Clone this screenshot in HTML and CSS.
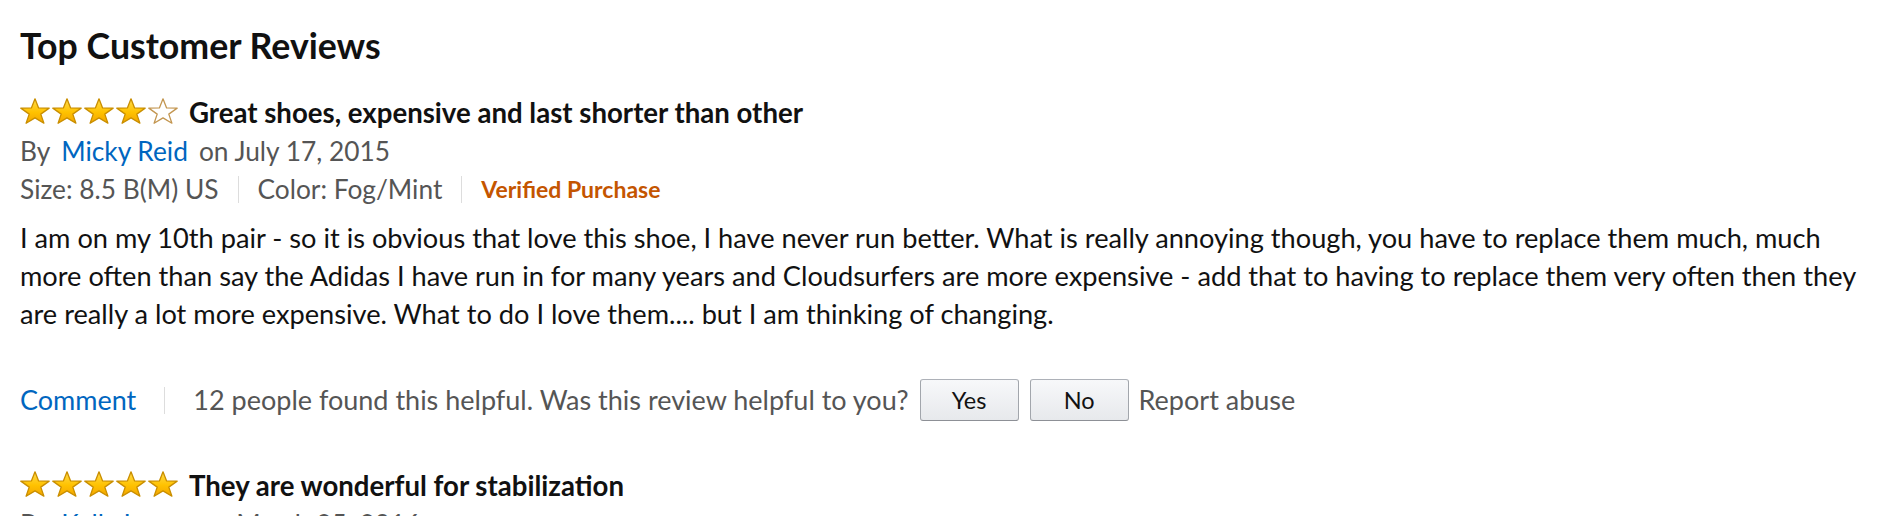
FILE: index.html
```html
<!DOCTYPE html>
<html lang="en">
<head>
<meta charset="utf-8">
<title>Top Customer Reviews</title>
<link rel="stylesheet" href="styles.css">
</head>
<body>
<svg class="defs" width="0" height="0" aria-hidden="true">
  <defs>
    <linearGradient id="gold" x1="0" y1="0" x2="0" y2="1">
      <stop offset="0" stop-color="#ffdb4d"/>
      <stop offset="0.55" stop-color="#ffc200"/>
      <stop offset="1" stop-color="#f3a500"/>
    </linearGradient>
    <symbol id="star" viewBox="0 0 30 26">
      <path d="M15 0.8 L18.6 9.9 L29.2 10.1 L20.8 16.1 L23.9 25.2 L15 19.9 L6.1 25.2 L9.2 16.1 L0.8 10.1 L11.4 9.9 Z"/>
    </symbol>
  </defs>
</svg>

<section class="reviews">
  <h2 class="heading">Top Customer Reviews</h2>

  <article class="review">
    <div class="title-row">
      <div class="stars">
        <svg class="star full"><use href="#star"/></svg>
        <svg class="star full"><use href="#star"/></svg>
        <svg class="star full"><use href="#star"/></svg>
        <svg class="star full"><use href="#star"/></svg>
        <svg class="star empty"><use href="#star"/></svg>
      </div>
      <span class="title">Great shoes, expensive and last shorter than other</span>
    </div>
    <div class="meta">
      <span class="by">By</span><a class="author" href="#">Micky Reid</a><span>on July 17, 2015</span>
    </div>
    <div class="meta attrs">
      <span>Size: 8.5 B(M) US</span>
      <span class="sep"></span>
      <span>Color: Fog/Mint</span>
      <span class="sep"></span>
      <span class="verified">Verified Purchase</span>
    </div>
    <p class="body-text">I am on my 10th pair - so it is obvious that love this shoe, I have never run better. What is really annoying though, you have to replace them much, much more often than say the Adidas I have run in for many years and Cloudsurfers are more expensive - add that to having to replace them very often then they are really a lot more expensive. What to do I love them.... but I am thinking of changing.</p>
    <div class="actions">
      <a class="comment" href="#">Comment</a>
      <span class="sep tall"></span>
      <span class="helpful">12 people found this helpful. Was this review helpful to you?</span>
      <button class="vote" type="button">Yes</button>
      <button class="vote" type="button">No</button>
      <span class="report">Report abuse</span>
    </div>
  </article>

  <article class="review next">
    <div class="title-row">
      <div class="stars">
        <svg class="star full"><use href="#star"/></svg>
        <svg class="star full"><use href="#star"/></svg>
        <svg class="star full"><use href="#star"/></svg>
        <svg class="star full"><use href="#star"/></svg>
        <svg class="star full"><use href="#star"/></svg>
      </div>
      <span class="title">They are wonderful for stabilization</span>
    </div>
    <div class="meta">
      <span class="by">By</span><a class="author" href="#">Kelly Lyons</a><span>on March 25, 2016</span>
    </div>
  </article>
</section>
</body>
</html>
```

FILE: styles.css
```css
* { box-sizing: border-box; }

html, body {
  margin: 0;
  background: #fff;
}

body {
  font-family: Lato, "Liberation Sans", sans-serif;
  color: #111;
}

.defs {
  position: absolute;
  width: 0;
  height: 0;
  overflow: hidden;
}

.reviews {
  padding: 26px 12px 0 20px;
}

.heading {
  margin: 0 0 28px;
  font-size: 35.7px;
  line-height: 40px;
  font-weight: 700;
}

.title-row {
  display: flex;
  align-items: flex-start;
  height: 38px;
}

.stars {
  display: flex;
  gap: 2px;
  margin-top: 4px;
}

.star {
  width: 30px;
  height: 26px;
  display: block;
}

.star.full {
  fill: url(#gold);
  stroke: #c98e00;
  stroke-width: 1.3;
  stroke-linejoin: round;
}

.star.empty {
  fill: #fff;
  stroke: #c39650;
  stroke-width: 1.3;
  stroke-linejoin: round;
}

.title {
  margin-left: 11px;
  font-size: 27.6px;
  line-height: 37px;
  font-weight: 700;
}

.meta {
  font-size: 26.3px;
  line-height: 38px;
  color: #555;
}

.by { margin-right: 11px; }

.author {
  color: #0066c0;
  text-decoration: none;
  margin-right: 11px;
}

.attrs {
  display: flex;
  align-items: center;
}

.sep {
  width: 1px;
  height: 27px;
  background: #ddd;
  margin: 0 19px;
}

.verified {
  color: #c45500;
  font-weight: 700;
  font-size: 23px;
}

.body-text {
  margin: 11px 0 0;
  font-size: 27.2px;
  line-height: 38px;
  color: #111;
}

.actions {
  display: flex;
  align-items: center;
  margin-top: 46px;
  font-size: 27px;
  line-height: 38px;
  color: #555;
}

.comment {
  color: #0066c0;
  text-decoration: none;
}

.sep.tall {
  margin: 0 28px;
}

.vote {
  width: 99px;
  height: 42px;
  margin-left: 11px;
  padding: 0;
  font-family: inherit;
  font-size: 23.5px;
  color: #111;
  background: linear-gradient(#f7f8fa, #e7e9ec);
  border: 1px solid #adb1b8;
  border-color: #adb1b8 #a2a6ac #8d9096;
  border-radius: 3px;
}

.report {
  margin-left: 10px;
}

.review.next {
  margin-top: 46px;
}
```
